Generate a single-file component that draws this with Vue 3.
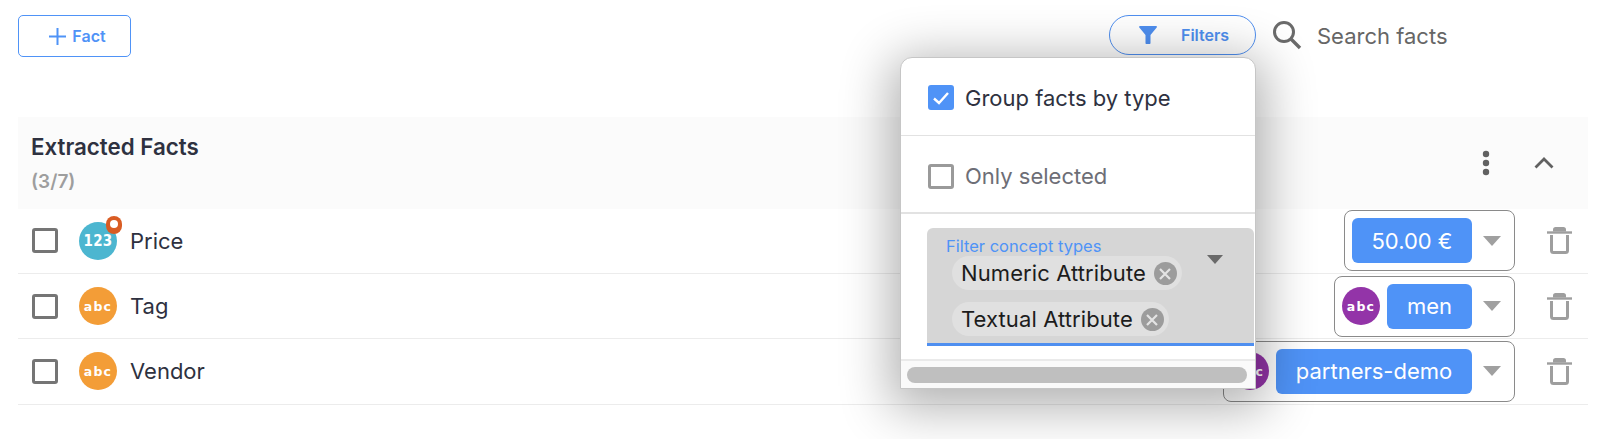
<script setup>
const rows = [
  { name: 'Price', kind: 'num', value: '50.00 €', chipW: 120, boxIcon: false, badge: true },
  { name: 'Tag', kind: 'abc', value: 'men', chipW: 85, boxIcon: true, badge: false },
  { name: 'Vendor', kind: 'abc', value: 'partners-demo', chipW: 196, boxIcon: true, badge: false },
]
</script>

<template>
  <div class="page">
    <div class="toolbar">
      <button class="add-btn">
        <svg width="17" height="17" viewBox="0 0 17 17"><path d="M8.500 0v17M0 8.500h17" stroke="#4f93f7" stroke-width="2" fill="none" /></svg>
        <span>Fact</span>
      </button>
      <div class="tools">
        <button class="filter-btn">
          <svg width="18" height="18" viewBox="0 0 18 18"><path d="M1 0h16c.8 0 1.200 .9 .7 1.500L11.500 9v8c0 .6-.4 1-1 1h-3c-.6 0-1-.4-1-1V9L.3 1.500C-.2 .9 .2 0 1 0z" fill="#4f8ff0" /></svg>
          <span>Filters</span>
        </button>
        <div class="search">
          <svg width="30" height="30" viewBox="0 0 30 30"><circle cx="12" cy="12" r="9.500" fill="none" stroke="#6b6b6b" stroke-width="3" /><path d="M18.500 18.500l9.500 9.500" stroke="#6b6b6b" stroke-width="3.400" fill="none" /></svg>
          <span class="search-text">Search facts</span>
        </div>
      </div>
    </div>

    <section class="panel">
      <header class="panel-head">
        <div>
          <div class="title">Extracted Facts</div>
          <div class="count">(3/7)</div>
        </div>
        <div class="head-actions">
          <svg width="8" height="26" viewBox="0 0 8 26"><circle cx="4" cy="4" r="3.200" fill="#616161" /><circle cx="4" cy="13" r="3.200" fill="#616161" /><circle cx="4" cy="22" r="3.200" fill="#616161" /></svg>
          <svg width="20" height="12" viewBox="0 0 20 12"><path d="M1.500 10.500L10 2l8.500 8.500" fill="none" stroke="#616161" stroke-width="2.800" /></svg>
        </div>
      </header>

      <div v-for="row in rows" :key="row.name" class="row">
        <span class="box"></span>
        <span class="type-icon" :class="row.kind === 'num' ? 'teal' : 'orange'">
          {{ row.kind === 'num' ? '123' : 'abc' }}
          <i v-if="row.badge" class="badge"></i>
        </span>
        <span class="name">{{ row.name }}</span>
        <div class="value-box">
          <span v-if="row.boxIcon" class="type-icon purple">abc</span>
          <span class="chip" :style="{ width: row.chipW + 'px' }">{{ row.value }}</span>
          <svg class="caret" width="18" height="10" viewBox="0 0 18 10"><path d="M0 0h18l-9 10z" fill="#a0a0a0" /></svg>
        </div>
        <svg class="trash" width="25" height="27" viewBox="0 0 25 27">
          <path d="M6 4.500V2.500C6 1 7 0 8.500 0h8C18 0 19 1 19 2.500V4.500z" fill="#9e9e9e" />
          <path d="M0 5.500h25" stroke="#9e9e9e" stroke-width="2.400" />
          <path d="M4.500 8v15.500c0 1.500 1 2 2 2h12c1 0 2-.5 2-2V8" fill="none" stroke="#9e9e9e" stroke-width="3" />
        </svg>
      </div>
    </section>

    <div class="popover">
      <label class="opt">
        <span class="box checked">
          <svg width="18" height="14" viewBox="0 0 18 14"><path d="M2 7.500l5 4.500L16 2" fill="none" stroke="#fff" stroke-width="2.400" /></svg>
        </span>
        <span>Group facts by type</span>
      </label>
      <label class="opt second">
        <span class="box light"></span>
        <span>Only selected</span>
      </label>
      <div class="select-wrap">
        <div class="select">
          <div class="select-label">Filter concept types</div>
          <div class="tag first">Numeric Attribute<i class="x"><svg width="12" height="12" viewBox="0 0 12 12"><path d="M1 1l10 10M11 1L1 11" stroke="#e4e4e4" stroke-width="2.200" /></svg></i></div>
          <div class="tag">Textual Attribute<i class="x"><svg width="12" height="12" viewBox="0 0 12 12"><path d="M1 1l10 10M11 1L1 11" stroke="#e4e4e4" stroke-width="2.200" /></svg></i></div>
          <svg class="select-caret" width="16" height="9" viewBox="0 0 16 9"><path d="M0 0h16l-8 9z" fill="#6a6a6a" /></svg>
        </div>
      </div>
      <div class="scroll"><div class="thumb"></div></div>
    </div>
  </div>
</template>

<style>
html, body { margin: 0; background: #fff; }
</style>

<style scoped>
.page {
  position: relative;
  width: 1597px;
  height: 439px;
  overflow: hidden;
  box-sizing: border-box;
  padding: 15px 9px 0 18px;
  font-family: Inter, "Liberation Sans", sans-serif;
  color: #2e3140;
}
.toolbar {
  display: flex;
  justify-content: space-between;
  align-items: flex-start;
  height: 102px;
}
button { font-family: inherit; background: #fff; cursor: pointer; }
.add-btn {
  width: 113px;
  height: 42px;
  box-sizing: border-box;
  border: 1px solid #4f93f7;
  border-radius: 5px;
  display: flex;
  align-items: center;
  justify-content: center;
  gap: 6px;
  padding: 0 0 0 6px;
  color: #4f93f7;
  font-size: 16px;
  font-weight: 600;
}
.tools { display: flex; align-items: center; height: 40px; }
.filter-btn {
  width: 147px;
  height: 40px;
  box-sizing: border-box;
  border: 1px solid #4f8ff0;
  border-radius: 20px;
  background: transparent;
  display: flex;
  align-items: center;
  padding: 0 0 0 29px;
  gap: 24px;
  color: #4f8ff0;
  font-size: 16px;
  font-weight: 600;
}
.search {
  display: flex;
  align-items: center;
  gap: 15px;
  width: 332px;
  padding-left: 16px;
  box-sizing: border-box;
  font-size: 22px;
  color: #666;
}
.search-text { padding-top: 2px; }
.panel { width: 100%; }
.panel-head {
  height: 92px;
  background: #fbfbfb;
  box-sizing: border-box;
  padding: 15px 16px 0 13px;
  display: flex;
  justify-content: space-between;
  align-items: flex-start;
}
.title { font-size: 22.300px; font-weight: 600; line-height: 30px; }
.count { font-size: 19px; font-weight: 600; color: #9e9e9e; line-height: 24px; margin-top: 8px; }
.head-actions { display: flex; align-items: center; gap: 44px; height: 62px; padding-right: 18px; box-sizing: border-box; }
.row {
  height: 65.200px;
  box-sizing: border-box;
  border-bottom: 1px solid #ececec;
  display: flex;
  align-items: center;
  padding: 0 16px 0 14px;
}
.row:first-of-type { padding-bottom: 1px; }
.box {
  width: 26px;
  height: 25px;
  box-sizing: border-box;
  border: 3px solid #757575;
  border-radius: 3px;
  flex: none;
  display: inline-flex;
  align-items: center;
  justify-content: center;
}
.box.checked { background: #4f93f7; border-color: #4f93f7; }
.box.light { border-color: #9a9a9a; }
.type-icon {
  position: relative;
  width: 38px;
  height: 38px;
  border-radius: 50%;
  flex: none;
  display: inline-flex;
  align-items: center;
  justify-content: center;
  color: #fff;
  font-family: "DejaVu Sans", sans-serif;
  font-weight: 700;
  font-size: 12.500px;
  letter-spacing: 1.200px;
}
.row > .type-icon { margin-left: 21px; }
.teal { background: #4cb6d0; font-size: 15px; font-stretch: condensed; letter-spacing: .3px; }
.orange { background: #f39d37; }
.purple { background: #9334a8; }
.badge {
  position: absolute;
  right: -5px;
  top: -6px;
  width: 16px;
  height: 18px;
  border-radius: 8px;
  background: #d95c23;
}
.badge::after {
  content: "";
  position: absolute;
  left: 4px;
  top: 4px;
  width: 8px;
  height: 8px;
  border-radius: 50%;
  background: #fff;
}
.name { margin-left: 13px; font-size: 22px; flex: 1; }
.value-box {
  height: 61px;
  box-sizing: border-box;
  border: 1px solid #8a8a8a;
  border-radius: 8px;
  display: flex;
  align-items: center;
  padding: 0 13px 0 7px;
  gap: 7px;
}
.chip {
  height: 45px;
  box-sizing: border-box;
  background: #4f93f7;
  border-radius: 6px;
  color: #fff;
  font-size: 22px;
  display: flex;
  align-items: center;
  justify-content: center;
}
.caret { margin-left: 4px; }
.trash { margin-left: 32px; flex: none; }
.popover {
  position: absolute;
  left: 900px;
  top: 57px;
  width: 356px;
  height: 332px;
  box-sizing: border-box;
  background: #fff;
  border: 1px solid #c6c6c6;
  border-radius: 12px 12px 0 0;
  box-shadow: 0 10px 50px 10px rgba(0, 0, 0, .3);
  overflow: hidden;
}
.opt {
  display: flex;
  align-items: center;
  gap: 11px;
  height: 78px;
  padding: 2px 0 0 27px;
  box-sizing: border-box;
  font-size: 22px;
  border-bottom: 1px solid #e2e2e2;
}
.opt.second { color: #6d6e76; border-bottom-width: 2px; padding-top: 4px; }
.select-wrap { padding: 14px 0 0 26px; height: 147px; box-sizing: border-box; border-bottom: 2px solid #eaeaea; }
.select {
  position: relative;
  height: 118px;
  width: 327px;
  box-sizing: border-box;
  background: #d6d6d6;
  border-bottom: 3px solid #4f8ff0;
  border-radius: 6px 6px 0 0;
  padding: 9px 0 0 25px;
}
.select-label { margin-left: -6px; font-size: 16.500px; line-height: 18px; color: #4f93f7; }
.tag {
  display: table;
  height: 34px;
  line-height: 34px;
  border-radius: 17px;
  background: #e0e0e0;
  color: #1c1c1c;
  font-size: 22px;
  letter-spacing: .1px;
  padding: 0 5px 0 9px;
  margin-bottom: 12px;
  white-space: nowrap;
}
.tag.first { margin-top: 1px; }
.x {
  display: inline-flex;
  vertical-align: middle;
  align-items: center;
  justify-content: center;
  width: 23px;
  height: 23px;
  margin: -3px 0 0 8px;
  border-radius: 50%;
  background: #9c9c9c;
}
.select-caret { position: absolute; right: 31px; top: 27px; }
.scroll { height: 29px; background: #fafafa; padding: 6px 6px; box-sizing: border-box; }
.thumb { height: 16px; width: 340px; border-radius: 8px; background: #bfbfbf; }
</style>
